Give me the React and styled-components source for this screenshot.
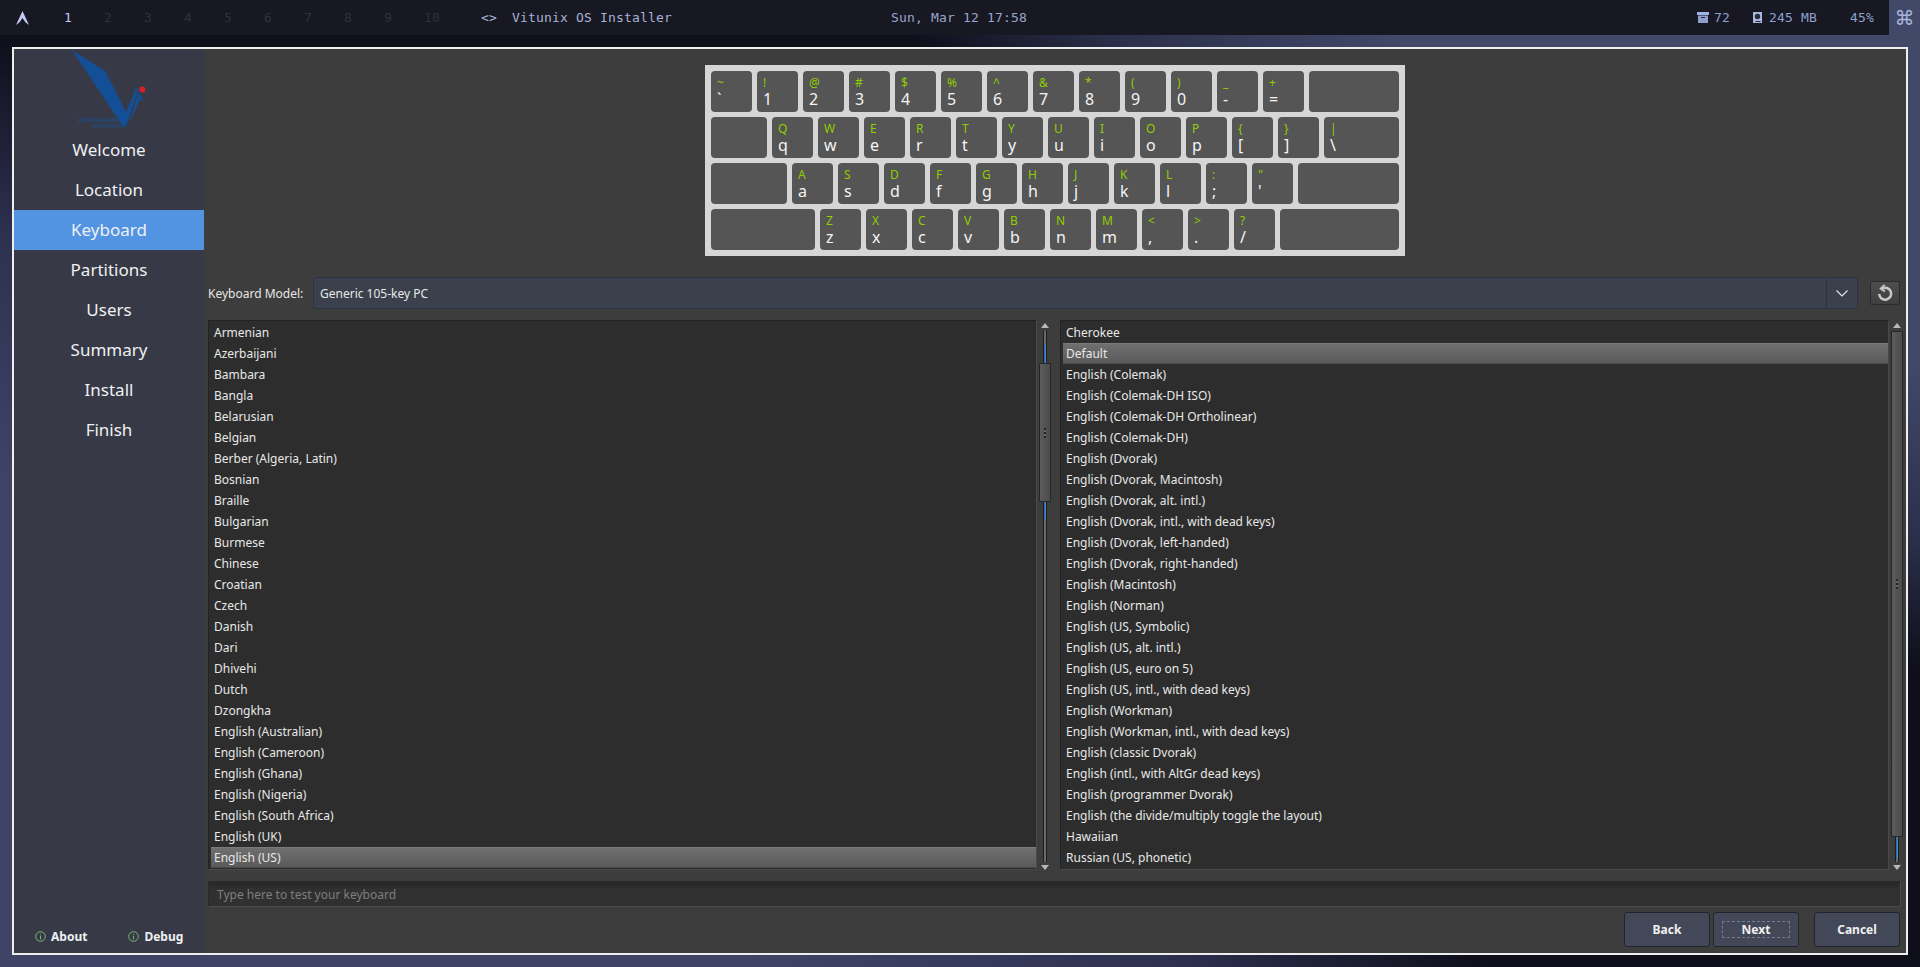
import React from "react";
import styled, { createGlobalStyle } from "styled-components";

const Global = createGlobalStyle`
  html, body { margin: 0; padding: 0; height: 100%; overflow: hidden; }
  #root { height: 100%; }
  * { box-sizing: border-box; }
`;

const Desktop = styled.div`
  width: 1920px; height: 967px; display: flex; flex-direction: column;
  background: linear-gradient(32deg, #3f4467 0%, #3f4467 22%, #2e3050 34%, #0e0f1a 43%, #0e0f1a 69%, #2b2f4a 75%, #414868 83%, #414868 100%);
  font-family: "Noto Sans", sans-serif;
`;
const TopBar = styled.header`
  height: 35px; flex: none; background: #171821; display: flex; align-items: center;
  font-family: "DejaVu Sans Mono", monospace; font-size: 13px; letter-spacing: 0.17px; color: #a9b1d6;
`;
const ArchMark = styled.svg`width: 13px; height: 14px; margin-left: 16px; margin-right: 35px; flex: none;`;
const Workspace = styled.span`
  width: 40px; text-align: left; color: ${p => (p.$on ? "#c0caf5" : "#2e3240")};
`;
const Workspaces = styled.div`display: flex; margin-right: 17px;`;
const Title = styled.div`display: flex; gap: 15px; color: #a9b1d6;`;
const Clock = styled.div`margin-left: 219px; color: #9aa5ce;`;
const Status = styled.div`margin-left: auto; display: flex; align-items: center; color: #8fa0d0; height: 100%;`;
const StatusItem = styled.span`display: flex; align-items: center; gap: ${p => p.$gap}px; margin-right: ${p => p.$mr}px;`;
const Cmd = styled.div`
  width: 31px; height: 35px; background: #414868; color: #a9b4de; display: flex; align-items: center; justify-content: center;
  font-size: 20px; letter-spacing: 0; font-family: "DejaVu Sans", sans-serif; margin-left: 15px;
`;

const Win = styled.main`
  margin: 12px 12px 0 12px; width: 1896px; height: 908px; border: 2px solid #eeeeee; background: #3d3d3d; display: flex; flex: none;
`;
const Side = styled.nav`
  width: 190px; flex: none; background: #373a46; display: flex; flex-direction: column; color: #eef0f2;
`;
const LogoWrap = styled.div`height: 81px; padding-left: 55px; padding-top: 1px; flex: none;`;
const NavItem = styled.div`
  height: 40px; flex: none; display: flex; align-items: center; justify-content: center; font-size: 17px;
  background: ${p => (p.$on ? "#5294e2" : "transparent")}; padding-bottom: 2px;
`;
const SideFoot = styled.div`
  margin-top: auto; display: flex; height: 22px; margin-bottom: 6px; padding-left: 21px; gap: 41px; font-size: 12px; font-weight: 700; align-items: center;
`;
const FootItem = styled.span`display: flex; align-items: center; gap: 5px;`;

const Content = styled.section`flex: 1; min-width: 0; display: flex; flex-direction: column; padding-right: 6px;`;
const KeyboardRow = styled.div`display: flex; justify-content: center; padding-top: 16px; padding-left: 6px; height: 228px; flex: none;`;
const KeyBoard = styled.div`
  width: 700px; height: 191px; background: #d6d6d6; padding: 6px; display: flex; flex-direction: column; gap: 5px; flex: none;
`;
const KeyRow = styled.div`display: flex; gap: 5px; height: 41px;`;
const Key = styled.div`
  width: ${p => p.$w || 41}px; height: 41px; background: #555555; border-radius: 4px; flex: none; padding: 4px 6px;
  display: flex; flex-direction: column;
`;
const KeyTop = styled.span`color: #8fce00; font-size: 12px; line-height: 15px; height: 15px;`;
const KeyLow = styled.span`color: #f4f4f4; font-size: 16px; line-height: 17px; height: 17px; margin-top: 1px;`;

const ModelRow = styled.div`display: flex; align-items: center; height: 32px; padding-left: 4px; flex: none;`;
const ModelLabel = styled.span`color: #e6e6e6; font-size: 12px; width: 105px; flex: none;`;
const Combo = styled.div`
  width: 1545px; height: 32px; background: #3b404d; border: 1px solid #2e3340; border-radius: 3px; display: flex; align-items: center; flex: none;
  color: #e8e8e8; font-size: 12px; padding-left: 6px;
`;
const ComboText = styled.span`flex: 1;`;
const ComboArrow = styled.div`width: 31px; height: 100%; border-left: 1px solid #2e3340; display: flex; align-items: center; justify-content: center;`;
const Reset = styled.div`
  width: 30px; height: 24px; margin-left: 12px; background: linear-gradient(#4e4e4e, #3f3f3f); border: 1px solid #2c2c2c; border-radius: 2px;
  display: flex; align-items: center; justify-content: center; flex: none;
`;

const Lists = styled.div`display: flex; height: 550px; margin-top: 11px; padding-left: 4px; flex: none;`;
const ListBox = styled.div`
  width: 829px; flex: none; background: #2d2d2d; border: 1px solid #232323; border-bottom-color: #4a4a4a; border-right-color: #4a4a4a;
  padding: 1px 0 1px 2px; display: flex; flex-direction: column; overflow: hidden;
`;
const Row = styled.div`
  height: 21px; flex: none; padding-left: 3px; display: flex; align-items: center; color: #e8e8e8; font-size: 12px;
  ${p => (p.$on ? "background: linear-gradient(#6f6f6f, #5a5a5a); border-top: 1px solid #7a7a7a; border-bottom: 1px solid #4a4a4a;" : "")}
`;
const Scroll = styled.div`width: 23px; flex: none; display: flex; flex-direction: column; align-items: center; padding-right: 8px;`;
const ArrowUp = styled.div`width:0;height:0;border-left:4px solid transparent;border-right:4px solid transparent;border-bottom:5px solid #b8b8b8;margin-top:3px;margin-bottom:3px;flex:none;`;
const ArrowDown = styled.div`width:0;height:0;border-left:4px solid transparent;border-right:4px solid transparent;border-top:5px solid #b8b8b8;margin-top:3px;flex:none;`;
const Track = styled.div`
  flex: 1; width: 12px; display: flex; flex-direction: column; align-items: center; min-height: 0;
`;
const Groove = styled.div`
  width: 4px; background: ${p => (p.$fill ? "linear-gradient(90deg,#2a5d9c,#5294e2)" : "#6a6a6a")}; border-left: 1px solid #1d1d1d; border-right: 1px solid #1d1d1d;
  ${p => (p.$h === undefined ? "flex: 1;" : `height: ${p.$h}px; flex: none;`)}
`;
const Thumb = styled.div`
  width: 12px; height: ${p => p.$h}px; flex: none; background: linear-gradient(90deg,#5c5c5c,#4c4c4c); border: 1px solid #262626; border-radius: 1px;
  display: flex; align-items: center; justify-content: center;
`;
const Dots = styled.div`width: 2px; height: 10px; background: repeating-linear-gradient(#222 0 2px, #666 2px 4px);`;

const TestInput = styled.div`
  margin: 11px -1px 0 4px; height: 26px; background: linear-gradient(#262626, #303030 30%); border: 1px solid #2b2b2b; border-bottom-color: #4c4c4c; border-right-color: #4c4c4c; border-radius: 2px;
  color: #7e7e7e; font-size: 12px; display: flex; align-items: center; padding-left: 8px; flex: none;
`;
const Buttons = styled.div`display: flex; justify-content: flex-end; margin-top: 5px; height: 35px; flex: none;`;
const Btn = styled.div`
  width: 86px; height: 35px; background: #434858; border: 1px solid #22242c; border-radius: 3px; color: #f0f0f0; font-size: 12px; font-weight: 700;
  display: flex; align-items: center; justify-content: center; margin-left: ${p => p.$ml || 0}px; flex: none;
`;
const Focus = styled.span`
  width: 68px; height: 17px; border: 1px dashed #777c8a; display: flex; align-items: center; justify-content: center;
`;

const left = ["Armenian","Azerbaijani","Bambara","Bangla","Belarusian","Belgian","Berber (Algeria, Latin)","Bosnian","Braille","Bulgarian","Burmese","Chinese","Croatian","Czech","Danish","Dari","Dhivehi","Dutch","Dzongkha","English (Australian)","English (Cameroon)","English (Ghana)","English (Nigeria)","English (South Africa)","English (UK)","English (US)"];
const right = ["Cherokee","Default","English (Colemak)","English (Colemak-DH ISO)","English (Colemak-DH Ortholinear)","English (Colemak-DH)","English (Dvorak)","English (Dvorak, Macintosh)","English (Dvorak, alt. intl.)","English (Dvorak, intl., with dead keys)","English (Dvorak, left-handed)","English (Dvorak, right-handed)","English (Macintosh)","English (Norman)","English (US, Symbolic)","English (US, alt. intl.)","English (US, euro on 5)","English (US, intl., with dead keys)","English (Workman)","English (Workman, intl., with dead keys)","English (classic Dvorak)","English (intl., with AltGr dead keys)","English (programmer Dvorak)","English (the divide/multiply toggle the layout)","Hawaiian","Russian (US, phonetic)"];

const nav = ["Welcome","Location","Keyboard","Partitions","Users","Summary","Install","Finish"];

const rows = [
  { keys: [["~","`"],["!","1"],["@","2"],["#","3"],["$","4"],["%","5"],["^","6"],["&","7"],["*","8"],["(","9"],[")","0"],["_","-"],["+","="],{w:90}] },
  { keys: [{w:56},["Q","q"],["W","w"],["E","e"],["R","r"],["T","t"],["Y","y"],["U","u"],["I","i"],["O","o"],["P","p"],["{","["],["}","]"],{w:75,t:"|",l:"\\"}] },
  { keys: [{w:76},["A","a"],["S","s"],["D","d"],["F","f"],["G","g"],["H","h"],["J","j"],["K","k"],["L","l"],[":",";"],['"',"'"],{w:101}] },
  { keys: [{w:104},["Z","z"],["X","x"],["C","c"],["V","v"],["B","b"],["N","n"],["M","m"],["<",","],[">","."],["?","/"],{w:119}] },
];

const Logo = () => (
  <svg width="82" height="80" viewBox="0 0 82 80" fontFamily="'Noto Sans', sans-serif" fontWeight="700" fontSize="4.6">
    <path d="M3 0 L36 21 L57 62 L67 38 L69.5 39 L58 74 L55 78 Z" fill="#134f96" />
    <path d="M69.5 42 L75 51 L71 49 L60 74 Z" fill="#134f96" />
    <circle cx="73.3" cy="39.5" r="3" fill="#d8202a" />
    <text x="9" y="72" textLength="40" lengthAdjust="spacingAndGlyphs" fill="#1a4f8f" opacity=".8">VISHWAKARMA</text>
    <text x="24" y="77.5" textLength="29" lengthAdjust="spacingAndGlyphs" fill="#1a4f8f" opacity=".8">INSTITUTES</text>
  </svg>
);

const Info = () => (
  <svg width="11" height="11" viewBox="0 0 11 11" fill="none" stroke="#72b872" strokeWidth="1">
    <circle cx="5.5" cy="5.5" r="4.8" />
    <path d="M5.5 4.6 V8.4 M5.5 2.6 V3.5" />
  </svg>
);

const ScrollBar = ({ gray, fillBefore, thumb, after }) => (
  <Scroll>
    <ArrowUp />
    <Track>
      {gray > 0 && <Groove $h={gray} />}
      {fillBefore > 0 && <Groove $h={fillBefore} $fill />}
      <Thumb $h={thumb}><Dots /></Thumb>
      <Groove $h={after} $fill />
      <Groove />
    </Track>
    <ArrowDown />
  </Scroll>
);

export default function App() {
  return (
    <Desktop>
      <Global />
      <TopBar>
        <ArchMark viewBox="0 0 13 14"><path d="M6.5 0 L13 14 L9.4 11.2 L6.5 7 L3.6 11.2 L0 14 Z" fill="#c0caf5" /></ArchMark>
        <Workspaces>
          {[1,2,3,4,5,6,7,8,9,10].map(n => <Workspace key={n} $on={n === 1}>{n}</Workspace>)}
        </Workspaces>
        <Title><span>&lt;&gt;</span><span>Vitunix OS Installer</span></Title>
        <Clock>Sun, Mar 12 17:58</Clock>
        <Status>
          <StatusItem $mr={23} $gap={5}>
            <svg width="12" height="11" viewBox="0 0 12 11"><path d="M0 0 h12 v3 h-12 z" fill="#9fb2e6"/><path d="M1 3.5 h10 v7.5 h-10 z" fill="#8d9ccb"/><path d="M4 5 h4 v1 h-4 z" fill="#2a2c3a"/></svg>
            72
          </StatusItem>
          <StatusItem $mr={33} $gap={7}>
            <svg width="9" height="11" viewBox="0 0 9 11"><path d="M0 0 h9 v11 h-9 z" fill="#a9b8e0"/><circle cx="4.5" cy="4.5" r="2.7" fill="#2a2c3a"/><path d="M2.5 9 h5 v1 h-5 z" fill="#2a2c3a"/></svg>
            245 MB
          </StatusItem>
          <span>45%</span>
          <Cmd>⌘</Cmd>
        </Status>
      </TopBar>
      <Win>
        <Side>
          <LogoWrap><Logo /></LogoWrap>
          {nav.map(n => <NavItem key={n} $on={n === "Keyboard"}>{n}</NavItem>)}
          <SideFoot>
            <FootItem><Info />About</FootItem>
            <FootItem><Info />Debug</FootItem>
          </SideFoot>
        </Side>
        <Content>
          <KeyboardRow>
            <KeyBoard>
              {rows.map((r, i) => (
                <KeyRow key={i}>
                  {r.keys.map((k, j) => Array.isArray(k)
                    ? <Key key={j}><KeyTop>{k[0]}</KeyTop><KeyLow>{k[1]}</KeyLow></Key>
                    : <Key key={j} $w={k.w}>{k.t && <KeyTop>{k.t}</KeyTop>}{k.l && <KeyLow>{k.l}</KeyLow>}</Key>)}
                </KeyRow>
              ))}
            </KeyBoard>
          </KeyboardRow>
          <ModelRow>
            <ModelLabel>Keyboard Model:</ModelLabel>
            <Combo>
              <ComboText>Generic 105-key PC</ComboText>
              <ComboArrow>
                <svg width="12" height="7" viewBox="0 0 12 7" fill="none" stroke="#e8e8e8" strokeWidth="1.1"><path d="M0.5 0.5 L6 6 L11.5 0.5" /></svg>
              </ComboArrow>
            </Combo>
            <Reset>
              <svg width="18" height="18" viewBox="0 0 18 18" fill="none" stroke="#c9c9c9" strokeWidth="2.5"><path d="M6 4.6 A6 6 0 1 1 3.2 10" /><path d="M8.6 0.8 L4.6 4.6 L9 7.6" strokeWidth="1.8" /></svg>
            </Reset>
          </ModelRow>
          <Lists>
            <ListBox>{left.map(t => <Row key={t} $on={t === "English (US)"}>{t}</Row>)}</ListBox>
            <ScrollBar gray={14} fillBefore={18} thumb={139} after={17} />
            <ListBox>{right.map(t => <Row key={t} $on={t === "Default"}>{t}</Row>)}</ListBox>
            <ScrollBar gray={0} fillBefore={0} thumb={506} after={22} />
          </Lists>
          <TestInput>Type here to test your keyboard</TestInput>
          <Buttons>
            <Btn>Back</Btn>
            <Btn $ml={3}><Focus>Next</Focus></Btn>
            <Btn $ml={15}>Cancel</Btn>
          </Buttons>
        </Content>
      </Win>
    </Desktop>
  );
}
